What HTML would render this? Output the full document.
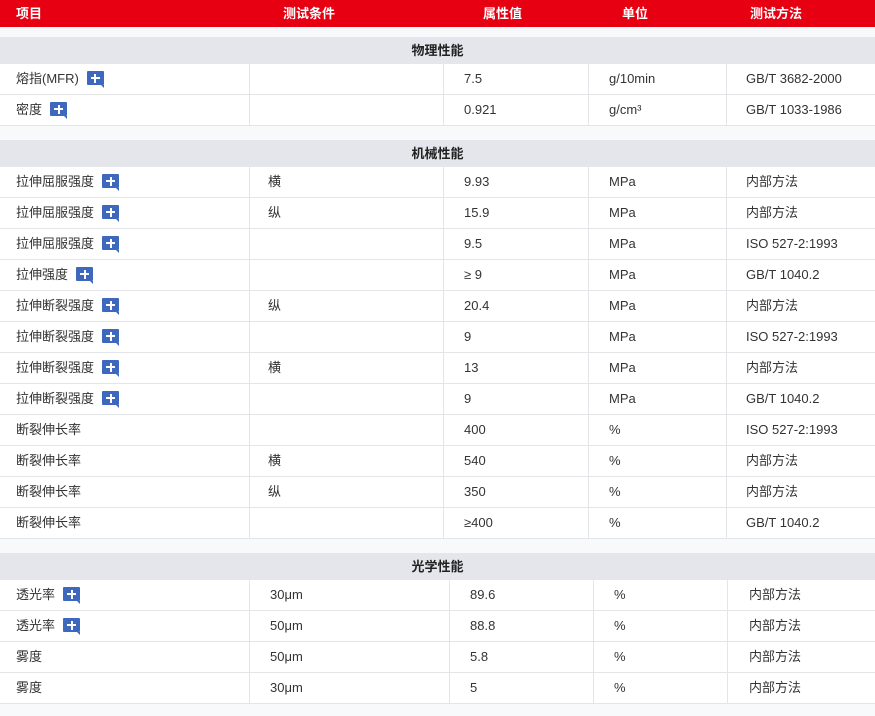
<!DOCTYPE html>
<html><head><meta charset="utf-8"><style>
*{margin:0;padding:0;box-sizing:border-box}
body{width:875px;height:716px;background:#f8f9fb;font-family:"Liberation Sans","Noto Sans CJK SC",sans-serif;font-size:13px;color:#333;position:relative;overflow:hidden}
.hd{position:absolute;left:0;top:0;width:875px;height:27px;background:#e60012;color:#fff;font-weight:bold}
.hd span{position:absolute;top:0;line-height:27px;height:27px}
.sh{position:absolute;left:0;width:875px;height:27px;background:#e5e6eb;font-weight:bold;text-align:center;line-height:27px;height:27px;color:#222;overflow:hidden}
.r{position:absolute;left:0;width:875px;height:31px;background:#fff;border-bottom:1px solid #e4e5e9}
.r span{position:absolute;top:0;height:30px;line-height:30px;white-space:nowrap;overflow:hidden}
.r i{position:absolute;top:0;width:1px;height:30px;background:#e4e5e9}
.ic{display:inline-block;width:17px;height:14px;background:#3d68bd;border-radius:1px;position:relative;vertical-align:-2px;margin-left:8px}
.ic:before{content:"";position:absolute;left:4px;top:6px;width:9px;height:2px;background:#fff}
.ic:after{content:"";position:absolute;left:7.5px;top:2.5px;width:2px;height:9px;background:#fff}
.ic b{position:absolute;right:0;bottom:-3px;width:0;height:0;border-top:3px solid #3d68bd;border-left:3px solid transparent}
</style></head><body>
<div class="hd"><span style="left:16px">项目</span><span style="left:283px">测试条件</span><span style="left:483px">属性值</span><span style="left:622px">单位</span><span style="left:750px">测试方法</span></div>

<div class="sh" style="top:37px">物理性能</div>
<div class="r" style="top:64px"><i style="left:249px"></i><i style="left:443px"></i><i style="left:588px"></i><i style="left:726px"></i><span style="left:16px">熔指(MFR)<em class="ic"><b></b></em></span><span style="left:464px">7.5</span><span style="left:609px">g/10min</span><span style="left:746px">GB/T 3682-2000</span></div>
<div class="r" style="top:95px"><i style="left:249px"></i><i style="left:443px"></i><i style="left:588px"></i><i style="left:726px"></i><span style="left:16px">密度<em class="ic"><b></b></em></span><span style="left:464px">0.921</span><span style="left:609px">g/cm³</span><span style="left:746px">GB/T 1033-1986</span></div>

<div class="sh" style="top:140px">机械性能</div>
<div class="r" style="top:167px"><i style="left:249px"></i><i style="left:443px"></i><i style="left:588px"></i><i style="left:726px"></i><span style="left:16px">拉伸屈服强度<em class="ic"><b></b></em></span><span style="left:268px">横</span><span style="left:464px">9.93</span><span style="left:609px">MPa</span><span style="left:746px">内部方法</span></div>
<div class="r" style="top:198px"><i style="left:249px"></i><i style="left:443px"></i><i style="left:588px"></i><i style="left:726px"></i><span style="left:16px">拉伸屈服强度<em class="ic"><b></b></em></span><span style="left:268px">纵</span><span style="left:464px">15.9</span><span style="left:609px">MPa</span><span style="left:746px">内部方法</span></div>
<div class="r" style="top:229px"><i style="left:249px"></i><i style="left:443px"></i><i style="left:588px"></i><i style="left:726px"></i><span style="left:16px">拉伸屈服强度<em class="ic"><b></b></em></span><span style="left:464px">9.5</span><span style="left:609px">MPa</span><span style="left:746px">ISO 527-2:1993</span></div>
<div class="r" style="top:260px"><i style="left:249px"></i><i style="left:443px"></i><i style="left:588px"></i><i style="left:726px"></i><span style="left:16px">拉伸强度<em class="ic"><b></b></em></span><span style="left:464px">≥ 9</span><span style="left:609px">MPa</span><span style="left:746px">GB/T 1040.2</span></div>
<div class="r" style="top:291px"><i style="left:249px"></i><i style="left:443px"></i><i style="left:588px"></i><i style="left:726px"></i><span style="left:16px">拉伸断裂强度<em class="ic"><b></b></em></span><span style="left:268px">纵</span><span style="left:464px">20.4</span><span style="left:609px">MPa</span><span style="left:746px">内部方法</span></div>
<div class="r" style="top:322px"><i style="left:249px"></i><i style="left:443px"></i><i style="left:588px"></i><i style="left:726px"></i><span style="left:16px">拉伸断裂强度<em class="ic"><b></b></em></span><span style="left:464px">9</span><span style="left:609px">MPa</span><span style="left:746px">ISO 527-2:1993</span></div>
<div class="r" style="top:353px"><i style="left:249px"></i><i style="left:443px"></i><i style="left:588px"></i><i style="left:726px"></i><span style="left:16px">拉伸断裂强度<em class="ic"><b></b></em></span><span style="left:268px">横</span><span style="left:464px">13</span><span style="left:609px">MPa</span><span style="left:746px">内部方法</span></div>
<div class="r" style="top:384px"><i style="left:249px"></i><i style="left:443px"></i><i style="left:588px"></i><i style="left:726px"></i><span style="left:16px">拉伸断裂强度<em class="ic"><b></b></em></span><span style="left:464px">9</span><span style="left:609px">MPa</span><span style="left:746px">GB/T 1040.2</span></div>
<div class="r" style="top:415px"><i style="left:249px"></i><i style="left:443px"></i><i style="left:588px"></i><i style="left:726px"></i><span style="left:16px">断裂伸长率</span><span style="left:464px">400</span><span style="left:609px">%</span><span style="left:746px">ISO 527-2:1993</span></div>
<div class="r" style="top:446px"><i style="left:249px"></i><i style="left:443px"></i><i style="left:588px"></i><i style="left:726px"></i><span style="left:16px">断裂伸长率</span><span style="left:268px">横</span><span style="left:464px">540</span><span style="left:609px">%</span><span style="left:746px">内部方法</span></div>
<div class="r" style="top:477px"><i style="left:249px"></i><i style="left:443px"></i><i style="left:588px"></i><i style="left:726px"></i><span style="left:16px">断裂伸长率</span><span style="left:268px">纵</span><span style="left:464px">350</span><span style="left:609px">%</span><span style="left:746px">内部方法</span></div>
<div class="r" style="top:508px"><i style="left:249px"></i><i style="left:443px"></i><i style="left:588px"></i><i style="left:726px"></i><span style="left:16px">断裂伸长率</span><span style="left:464px">≥400</span><span style="left:609px">%</span><span style="left:746px">GB/T 1040.2</span></div>

<div class="sh" style="top:553px">光学性能</div>
<div class="r" style="top:580px"><i style="left:249px"></i><i style="left:449px"></i><i style="left:593px"></i><i style="left:727px"></i><span style="left:16px">透光率<em class="ic"><b></b></em></span><span style="left:270px">30μm</span><span style="left:470px">89.6</span><span style="left:614px">%</span><span style="left:749px">内部方法</span></div>
<div class="r" style="top:611px"><i style="left:249px"></i><i style="left:449px"></i><i style="left:593px"></i><i style="left:727px"></i><span style="left:16px">透光率<em class="ic"><b></b></em></span><span style="left:270px">50μm</span><span style="left:470px">88.8</span><span style="left:614px">%</span><span style="left:749px">内部方法</span></div>
<div class="r" style="top:642px"><i style="left:249px"></i><i style="left:449px"></i><i style="left:593px"></i><i style="left:727px"></i><span style="left:16px">雾度</span><span style="left:270px">50μm</span><span style="left:470px">5.8</span><span style="left:614px">%</span><span style="left:749px">内部方法</span></div>
<div class="r" style="top:673px"><i style="left:249px"></i><i style="left:449px"></i><i style="left:593px"></i><i style="left:727px"></i><span style="left:16px">雾度</span><span style="left:270px">30μm</span><span style="left:470px">5</span><span style="left:614px">%</span><span style="left:749px">内部方法</span></div>
</body></html>
